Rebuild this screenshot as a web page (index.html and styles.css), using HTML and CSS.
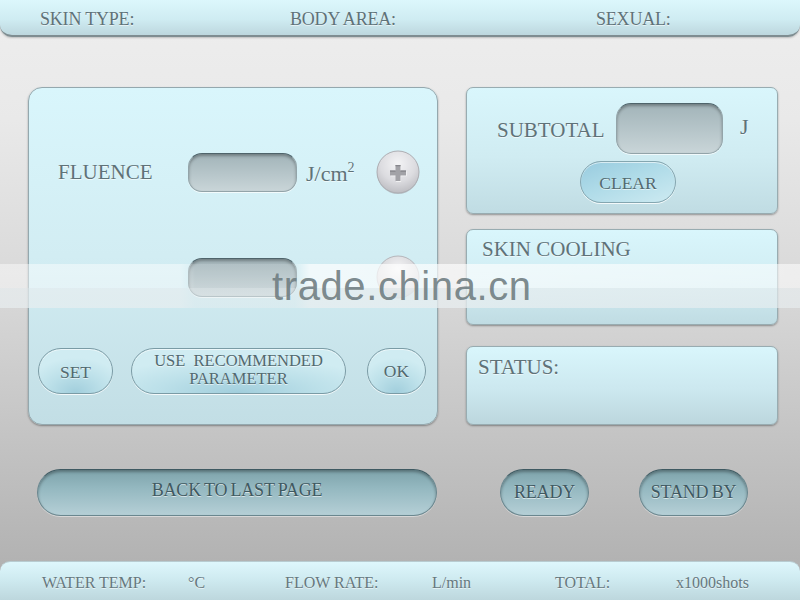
FILE: index.html
```html
<!DOCTYPE html>
<html>
<head>
<meta charset="utf-8">
<link rel="stylesheet" href="styles.css">
</head>
<body>
<div class="screen">
  <header class="topbar">
    <span class="tb tb1">SKIN TYPE:</span>
    <span class="tb tb2">BODY AREA:</span>
    <span class="tb">SEXUAL:</span>
  </header>

  <main class="main">
    <section class="panel-left">
      <div class="row row1">
        <span class="label">FLUENCE</span>
        <div class="field"></div>
        <span class="unit">J/cm<sup>2</sup></span>
        <button class="plus" type="button">
          <svg width="44" height="44" viewBox="0 0 44 44">
            <defs>
              <radialGradient id="pg1" cx="50%" cy="30%" r="70%">
                <stop offset="0" stop-color="#f3f3f5"/>
                <stop offset="0.6" stop-color="#dcdce0"/>
                <stop offset="1" stop-color="#bdbdc2"/>
              </radialGradient>
            </defs>
            <circle cx="22" cy="23" r="21" fill="#9a9aa0" opacity="0.5"/>
            <circle cx="22" cy="22" r="21" fill="url(#pg1)" stroke="#aeaeb3" stroke-width="1"/>
            <path d="M19.5 15h5v5.5h5.5v5h-5.5v5.5h-5v-5.5H14v-5h5.5z" fill="#ffffff" opacity="0.8" transform="translate(0.6 0.8)"/>
            <path d="M19.5 15h5v5.5h5.5v5h-5.5v5.5h-5v-5.5H14v-5h5.5z" fill="#a2a2a7"/>
            <path d="M19.5 15h5v1.2h-5zM14 20.5h5.5v1.2H14zM24.5 20.5H30v1.2h-5.5z" fill="#85858b"/>
          </svg>
        </button>
      </div>
      <div class="row row2">
        <span class="label"></span>
        <div class="field"></div>
        <span class="unit"></span>
        <button class="plus" type="button">
          <svg width="44" height="44" viewBox="0 0 44 44">
            <defs>
              <radialGradient id="pg2" cx="50%" cy="30%" r="70%">
                <stop offset="0" stop-color="#f3f3f5"/>
                <stop offset="1" stop-color="#c6c6ca"/>
              </radialGradient>
            </defs>
            <circle cx="22" cy="22" r="21" fill="url(#pg2)" stroke="#b6b6bb" stroke-width="1"/>
          </svg>
        </button>
      </div>
      <div class="btnrow">
        <div class="pill btn-set">SET</div>
        <div class="pill btn-use">USE&nbsp; RECOMMENDED<br>PARAMETER</div>
        <div class="pill btn-ok">OK</div>
      </div>
    </section>

    <aside class="right">
      <section class="rpanel subtotal">
        <div class="subrow">
          <span class="sublabel">SUBTOTAL</span>
          <div class="field field-big"></div>
          <span class="subunit">J</span>
        </div>
        <div class="pill clear">CLEAR</div>
      </section>
      <section class="rpanel cooling">
        <span class="ptitle">SKIN COOLING</span>
      </section>
      <section class="rpanel status">
        <span class="ptitle">STATUS:</span>
      </section>
    </aside>
  </main>

  <div class="actions">
    <div class="dpill back">BACK TO LAST PAGE</div>
    <div class="dpill ready">READY</div>
    <div class="dpill standby">STAND BY</div>
  </div>

  <footer class="bottombar">
    <span class="bb bb1">WATER TEMP:</span>
    <span class="bb bb2">°C</span>
    <span class="bb bb3">FLOW RATE:</span>
    <span class="bb bb4">L/min</span>
    <span class="bb bb5">TOTAL:</span>
    <span class="bb">x1000shots</span>
  </footer>

  <div class="watermark">
    <div class="wm-top"></div>
    <div class="wm-bottom"></div>
    <span class="wm-text">trade.china.cn</span>
  </div>
</div>
</body>
</html>
```

FILE: styles.css
```css
* { box-sizing: border-box; }

html, body {
  margin: 0;
  padding: 0;
}

body {
  font-family: "Liberation Serif", "Times New Roman", serif;
  color: #5f7278;
}

.screen {
  width: 800px;
  height: 600px;
  position: relative;
  overflow: hidden;
  display: flex;
  flex-direction: column;
  background: linear-gradient(#eeeeee 0px, #e9e9e9 120px, #d7d7d7 300px, #c2c2c2 450px, #adadad 600px);
}

/* ---------- top bar ---------- */
.topbar {
  height: 37px;
  flex: none;
  display: flex;
  align-items: center;
  padding: 3px 0 0 40px;
  border-bottom: 2px solid #7f8d91;
  border-radius: 0 0 12px 12px;
  background: linear-gradient(#dcf7fc, #cfecf2 55%, #bdd7de);
  box-shadow: 0 1px 2px rgba(0, 0, 0, 0.2);
}

.tb {
  font-size: 18px;
  letter-spacing: -0.2px;
  text-shadow: 0 1px 0 rgba(255, 255, 255, 0.6);
}
.tb1 { width: 250px; }
.tb2 { width: 306px; }

/* ---------- main ---------- */
.main {
  flex: none;
  display: flex;
  gap: 28px;
  margin-top: 50px;
  padding-left: 28px;
}

.panel-left {
  width: 410px;
  height: 338px;
  border: 1px solid #94a8ae;
  border-radius: 14px;
  background: linear-gradient(#d9f6fc, #d2edf3 50%, #c2dee5);
  box-shadow: 0 1px 2px rgba(0, 0, 0, 0.35);
  display: flex;
  flex-direction: column;
}

.row {
  display: flex;
  align-items: center;
  height: 44px;
  padding-left: 29px;
}
.row1 { margin-top: 62px; }
.row2 { margin-top: 61px; }

.label {
  width: 130px;
  font-size: 21px;
  text-shadow: 0 1px 0 rgba(255, 255, 255, 0.6);
}

.field {
  width: 109px;
  height: 39px;
  border-radius: 14px;
  border: 1px solid #93a4a9;
  border-top-color: #4f646b;
  background: linear-gradient(#a2b4b9, #b7c6ca 55%, #c9d5d8);
  box-shadow: inset 0 2px 3px rgba(0, 0, 0, 0.3), 0 1px 0 rgba(255, 255, 255, 0.7);
}

.unit {
  width: 70px;
  margin-left: 9px;
  font-size: 22px;
  padding-top: 4px;
  text-shadow: 0 1px 0 rgba(255, 255, 255, 0.6);
}
.unit sup {
  font-size: 14px;
  vertical-align: 9px;
  line-height: 0;
}

.plus {
  width: 44px;
  height: 44px;
  padding: 0;
  margin: 0;
  border: 0;
  background: none;
  display: block;
}
.plus svg { display: block; }

.btnrow {
  display: flex;
  margin-top: 49px;
  padding-left: 9px;
  gap: 18px;
}

.pill {
  height: 46px;
  border-radius: 23px;
  border: 1px solid #7a9ba5;
  background: radial-gradient(ellipse 70% 80% at 50% 100%, #a1cedc, #bce0e9 55%, #d0ecf2 100%);
  box-shadow: inset 0 1px 0 rgba(255, 255, 255, 0.6), 0 1px 0 rgba(255, 255, 255, 0.8);
  display: flex;
  align-items: center;
  justify-content: center;
  text-align: center;
  color: #52696f;
  font-size: 17.5px;
  text-shadow: 0 1px 0 rgba(255, 255, 255, 0.6);
}
.btn-set { width: 75px; padding-top: 3px; }
.btn-use {
  width: 215px;
  font-size: 16.5px;
  line-height: 18.5px;
  padding-bottom: 2px;
}
.btn-ok { width: 59px; margin-left: 3px; }

/* ---------- right column ---------- */
.right {
  width: 312px;
  display: flex;
  flex-direction: column;
}

.rpanel {
  border: 1px solid #98acb1;
  border-radius: 7px;
  background: linear-gradient(#d9f6fc, #d0ecf2 55%, #c0dce3);
  box-shadow: 0 1px 2px rgba(0, 0, 0, 0.35);
}

.subtotal {
  height: 127px;
  padding-top: 15px;
}

.subrow {
  display: flex;
  align-items: center;
  height: 51px;
}

.sublabel {
  width: 149px;
  padding-left: 30px;
  padding-top: 4px;
  font-size: 21px;
  text-shadow: 0 1px 0 rgba(255, 255, 255, 0.6);
}

.field-big {
  width: 107px;
  height: 51px;
  border-radius: 15px;
}

.subunit {
  margin-left: 17px;
  font-size: 22px;
  margin-top: -4px;
  text-shadow: 0 1px 0 rgba(255, 255, 255, 0.6);
}

.clear {
  width: 96px;
  height: 42px;
  border-radius: 21px;
  margin-top: 7px;
  margin-left: 113px;
  padding-top: 2px;
  background: linear-gradient(160deg, #98cbdf 0%, #afdbe8 45%, #cdeaf1 100%);
  border-color: #84a6b0;
}

.cooling {
  height: 96px;
  margin-top: 15px;
  padding: 7px 0 0 15px;
}

.status {
  height: 79px;
  margin-top: 21px;
  padding: 8px 0 0 11px;
  background: linear-gradient(#d9f6fc, #cce8ef 55%, #bcd7de);
}

.ptitle {
  font-size: 21px;
  text-shadow: 0 1px 0 rgba(255, 255, 255, 0.6);
}

/* ---------- actions ---------- */
.actions {
  flex: none;
  display: flex;
  margin-top: 44px;
  padding-left: 37px;
}

.dpill {
  height: 47px;
  border-radius: 24px;
  border: 1px solid #6a878f;
  border-top-color: #3f5a62;
  background: linear-gradient(#7ea3ab 0%, #94b8c0 40%, #b5cfd6 100%);
  box-shadow: inset 0 2px 3px rgba(0, 0, 0, 0.3), 0 1px 0 rgba(255, 255, 255, 0.45);
  display: flex;
  align-items: center;
  justify-content: center;
  color: #3f5961;
  font-size: 18px;
  letter-spacing: -0.2px;
  word-spacing: -1px;
  text-shadow: 0 1px 0 rgba(255, 255, 255, 0.6);
}
.back { width: 400px; padding-bottom: 4px; }
.ready { width: 89px; margin-left: 63px; }
.standby { width: 109px; margin-left: 50px; }

/* ---------- bottom bar ---------- */
.bottombar {
  flex: none;
  height: 39px;
  margin-top: auto;
  display: flex;
  align-items: center;
  padding: 3px 0 0 42px;
  border-top: 1px solid #b8ccd1;
  border-radius: 10px 10px 0 0;
  background: linear-gradient(#def7fc, #cde9ef 50%, #bdd7dd);
}

.bb {
  font-size: 16px;
  color: #66787e;
  text-shadow: 0 1px 0 rgba(255, 255, 255, 0.6);
}
.bb1 { width: 146px; }
.bb2 { width: 97px; }
.bb3 { width: 147px; }
.bb4 { width: 123px; }
.bb5 { width: 121px; }

/* ---------- watermark overlay ---------- */
.watermark {
  position: absolute;
  left: 0;
  top: 264px;
  width: 800px;
  height: 44px;
  pointer-events: none;
}

.wm-top {
  height: 24px;
  background: linear-gradient(90deg,
    rgba(255, 255, 255, 0.45) 0px,
    rgba(255, 255, 255, 0.45) 180px,
    rgba(255, 255, 255, 0.12) 195px,
    rgba(255, 255, 255, 0.12) 295px,
    rgba(255, 255, 255, 0.7) 310px,
    rgba(255, 255, 255, 0.55) 800px);
}

.wm-bottom {
  height: 20px;
  background: linear-gradient(90deg,
    rgba(232, 238, 240, 0.7) 0px,
    rgba(232, 238, 240, 0.7) 180px,
    rgba(232, 238, 240, 0.45) 195px,
    rgba(232, 238, 240, 0.45) 295px,
    rgba(232, 238, 240, 0.8) 310px,
    rgba(232, 238, 240, 0.65) 800px);
}

.wm-text {
  position: absolute;
  left: 272px;
  top: 0;
  line-height: 44px;
  font-family: "Liberation Sans", Arial, sans-serif;
  font-size: 40px;
  color: rgba(110, 124, 128, 0.9);
  letter-spacing: 0.6px;
}
```
